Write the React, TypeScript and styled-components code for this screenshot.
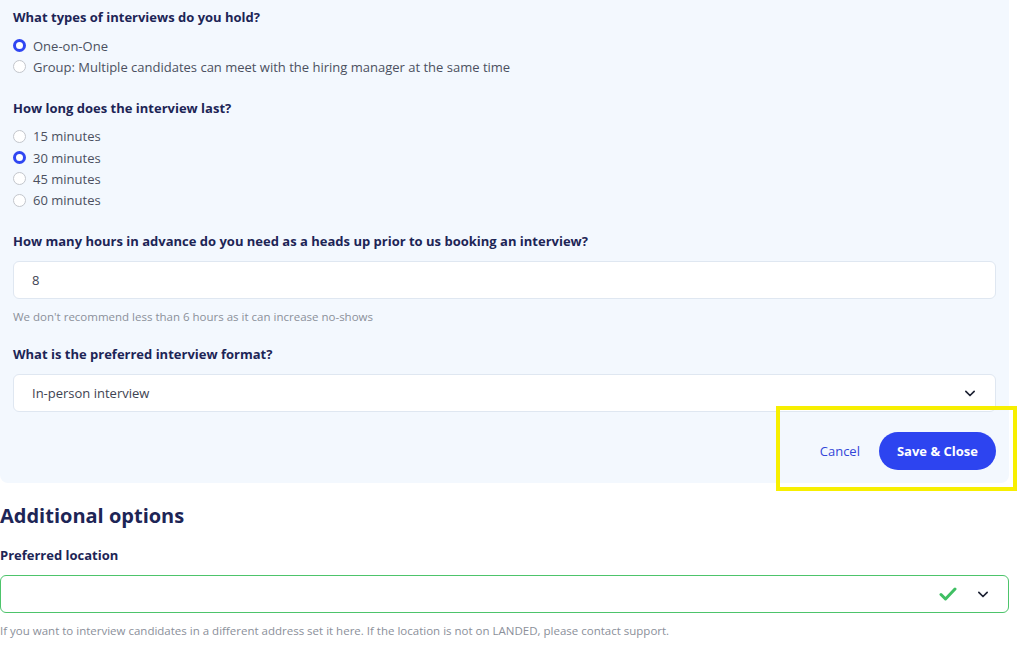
import React from "react"
import styled, { createGlobalStyle } from "styled-components"

const GlobalStyle = createGlobalStyle`
  html, body {
    margin: 0;
    padding: 0;
    background: #ffffff;
    font-family: "Open Sans", "Noto Sans", sans-serif;
  }
`

const Page = styled.div`
  position: relative;
  width: 1021px;
  height: 647px;
  overflow: hidden;
`

const Panel = styled.section`
  width: 1009px;
  box-sizing: border-box;
  background: #f3f8fe;
  border-radius: 0 0 8px 8px;
  padding: 8px 13px 13px 13px;
`

const Question = styled.h4`
  margin: 0 0 11px;
  font-size: 13px;
  line-height: 18px;
  font-weight: 700;
  color: #1d2556;
`

const Group = styled.div`
  margin-bottom: 21px;
`

const OptionList = styled.div`
  display: flex;
  flex-direction: column;
  margin-top: -2px;
`

const Option = styled.label`
  display: flex;
  align-items: center;
  gap: 7px;
  height: 21.3px;
  font-size: 13px;
  color: #4b5060;
`

const Radio = styled.span<{ $checked?: boolean }>`
  width: 13px;
  height: 13px;
  box-sizing: border-box;
  border-radius: 50%;
  background: #fff;
  border: ${(p) => (p.$checked ? "3.5px solid #2f46f2" : "1px solid #c3c6cc")};
`

const Field = styled.div<{ $valid?: boolean }>`
  display: flex;
  align-items: center;
  height: 38px;
  box-sizing: border-box;
  background: #fff;
  border: 1px solid ${(p) => (p.$valid ? "#4dc46b" : "#dfe7f1")};
  border-radius: 6px;
  padding: 0 15px 0 18px;
  font-size: 13px;
  color: #3e4352;
`

const FieldText = styled.span`
  flex: 1;
`

const Hint = styled.p`
  margin: 10px 0 0;
  font-size: 11.5px;
  line-height: 15px;
  color: #8b909a;
`

const Actions = styled.div`
  display: flex;
  justify-content: flex-end;
  align-items: center;
  gap: 19px;
  margin-top: 20px;
`

const LinkButton = styled.button`
  background: none;
  border: none;
  padding: 0;
  font-family: inherit;
  font-size: 13px;
  color: #3346d8;
`

const PrimaryButton = styled.button`
  height: 38px;
  padding: 0 18px;
  border: none;
  border-radius: 19px;
  background: #2d44f0;
  color: #fff;
  font-family: inherit;
  font-size: 13px;
  font-weight: 700;
`

const Section = styled.section`
  width: 1009px;
  padding-top: 20px;
`

const SectionTitle = styled.h2`
  margin: 0 0 17px;
  font-size: 20px;
  line-height: 26px;
  font-weight: 700;
  color: #1d2556;
`

const Icons = styled.span`
  display: flex;
  align-items: center;
  gap: 16px;
`

const Highlight = styled.div`
  position: absolute;
  left: 776px;
  top: 406px;
  width: 241px;
  height: 85px;
  box-sizing: border-box;
  border: 4px solid #f7ef00;
  pointer-events: none;
`

const Chevron = () => (
  <svg width="20" height="20" viewBox="0 0 24 24" fill="none" stroke="#1d2233" strokeWidth="2" strokeLinecap="round" strokeLinejoin="round">
    <path d="M7 10l5 5 5-5" />
  </svg>
)

const Check = () => (
  <svg width="18" height="16" viewBox="0 0 18 16" fill="none" stroke="#3fbf63" strokeWidth="3" strokeLinecap="round" strokeLinejoin="round">
    <path d="M2 8.5l4.5 4.5L16 3" />
  </svg>
)

const types = ["One-on-One", "Group: Multiple candidates can meet with the hiring manager at the same time"]
const durations = ["15 minutes", "30 minutes", "45 minutes", "60 minutes"]

export default function App() {
  return (
    <Page>
      <GlobalStyle />
      <Panel>
        <Group>
          <Question>What types of interviews do you hold?</Question>
          <OptionList>
            {types.map((t, i) => (
              <Option key={t}>
                <Radio $checked={i === 0} />
                {t}
              </Option>
            ))}
          </OptionList>
        </Group>
        <Group>
          <Question>How long does the interview last?</Question>
          <OptionList>
            {durations.map((d) => (
              <Option key={d}>
                <Radio $checked={d === "30 minutes"} />
                {d}
              </Option>
            ))}
          </OptionList>
        </Group>
        <Group>
          <Question>How many hours in advance do you need as a heads up prior to us booking an interview?</Question>
          <Field>
            <FieldText>8</FieldText>
          </Field>
          <Hint>We don't recommend less than 6 hours as it can increase no-shows</Hint>
        </Group>
        <div>
          <Question>What is the preferred interview format?</Question>
          <Field>
            <FieldText>In-person interview</FieldText>
            <Chevron />
          </Field>
        </div>
        <Actions>
          <LinkButton>Cancel</LinkButton>
          <PrimaryButton>Save &amp; Close</PrimaryButton>
        </Actions>
      </Panel>
      <Section>
        <SectionTitle>Additional options</SectionTitle>
        <Question>Preferred location</Question>
        <Field $valid>
          <FieldText />
          <Icons>
            <Check />
            <Chevron />
          </Icons>
        </Field>
        <Hint>If you want to interview candidates in a different address set it here. If the location is not on LANDED, please contact support.</Hint>
      </Section>
      <Highlight />
    </Page>
  )
}
